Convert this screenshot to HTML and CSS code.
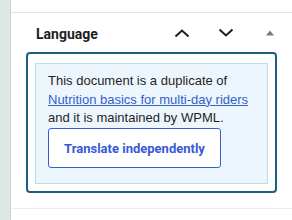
FILE: index.html
```html
<!DOCTYPE html>
<html lang="en">
<head>
    <meta charset="UTF-8">
    <title>Language</title>
    <link rel="stylesheet" href="styles.css">
</head>
<body>
    <div class="layout">
        <div class="strip"></div>
        <div class="sidebar">
            <div class="panel">
                <div class="panel-header">
                    <h2 class="panel-title">Language</h2>
                    <button class="icon-btn" aria-label="Move up">
                        <svg width="16" height="10" viewBox="0 0 16 10"><polyline points="1.5,8.5 8,2.5 14.5,8.5" fill="none" stroke="#1e1e1e" stroke-width="2"/></svg>
                    </button>
                    <button class="icon-btn" aria-label="Move down">
                        <svg width="16" height="10" viewBox="0 0 16 10"><polyline points="1.5,1.5 8,7.5 14.5,1.5" fill="none" stroke="#1e1e1e" stroke-width="2"/></svg>
                    </button>
                    <button class="icon-btn" aria-label="Toggle panel">
                        <svg width="8" height="6" viewBox="0 0 8 6"><polygon points="0,5.5 4,0.5 8,5.5" fill="#787c82"/></svg>
                    </button>
                </div>
                <div class="panel-body">
                    <div class="focus-box">
                        <div class="notice">
                            <p>This document is a duplicate of <a href="#">Nutrition basics for multi-day riders</a> and it is maintained by WPML.</p>
                            <button class="translate-btn">Translate independently</button>
                        </div>
                    </div>
                </div>
            </div>
        </div>
    </div>
</body>
</html>
```

FILE: styles.css
```css
/* Base */
body {
    margin: 0;
    font-family: Roboto, "Liberation Sans", sans-serif;
    background: #fff;
    color: #1e1e1e;
}

.layout {
    display: flex;
    height: 220px;
}

/* Left edge of the editor */
.strip {
    width: 10px;
    background: #dde8e3;
    border-right: 1px solid #cbd5d1;
}

.sidebar {
    flex: 1;
    padding-top: 12px;
}

/* Panel */
.panel {
    border-top: 1px solid #e2e4e7;
    border-bottom: 1px solid #eeeeee;
}

.panel-header {
    display: flex;
    align-items: center;
    height: 39px;
    padding-left: 25px;
}

.panel-title {
    flex: 1;
    margin: 0;
    padding-top: 2px;
    font-size: 14px;
    font-weight: 700;
    color: #1e1e1e;
}

.icon-btn {
    width: 44px;
    height: 39px;
    padding: 0;
    border: none;
    background: none;
    display: flex;
    align-items: center;
    justify-content: center;
    cursor: pointer;
}

.panel-body {
    padding: 0 15px 15px;
}

.focus-box {
    border: 2px solid #1d5f82;
    border-radius: 4px;
    padding: 9px 7px 7px;
}

/* WPML notice */
.notice {
    background: #eef6fd;
    border: 1px solid #bcdcec;
    padding: 8px 12px 15px;
}

.notice p {
    margin: 0;
    font-family: "Liberation Sans", Arial, sans-serif;
    font-size: 13px;
    line-height: 18.7px;
    color: #1e1e1e;
}

.notice a {
    color: #3060c8;
}

.translate-btn {
    display: block;
    width: 173px;
    height: 40px;
    font-family: inherit;
    font-size: 13px;
    font-weight: 700;
    color: #3858d6;
    background: #fff;
    border: 1px solid #3858d6;
    border-radius: 3px;
    cursor: pointer;
}
```
